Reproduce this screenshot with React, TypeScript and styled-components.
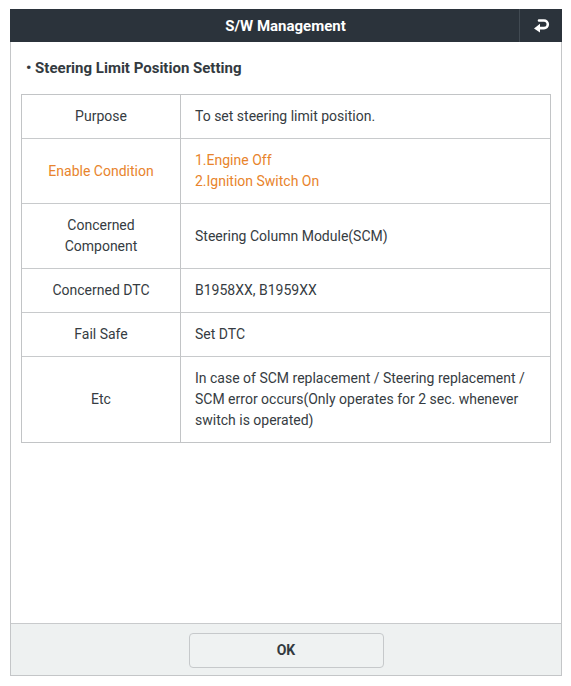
import React from "react";
import styled, { createGlobalStyle } from "styled-components";

const Global = createGlobalStyle`
  html, body { margin: 0; padding: 0; background: #ffffff; }
  body { font-family: Roboto, "Liberation Sans", Arial, sans-serif; }
`;

const Page = styled.div`
  padding: 9px 9px 10px 10px;
`;

const Panel = styled.div`
  width: 552px;
  height: 667px;
  box-sizing: border-box;
  border: 1px solid #c4c6c8;
  border-top: none;
  display: flex;
  flex-direction: column;
  background: #ffffff;
`;

const Header = styled.div`
  height: 33px;
  margin: 0 -1px;
  background: #2b333b;
  display: flex;
  align-items: center;
`;

const Title = styled.div`
  flex: 1;
  text-align: center;
  color: #ffffff;
  font-weight: 700;
  font-size: 15px;
  padding-left: 42px;
`;

const BackButton = styled.div`
  width: 42px;
  height: 33px;
  border-left: 1px solid #414a52;
  display: flex;
  align-items: center;
  justify-content: center;
`;

const Body = styled.div`
  flex: 1;
  padding: 0 10px;
`;

const Subtitle = styled.div`
  padding: 16px 0 15px 5px;
  font-size: 15px;
  line-height: 21px;
  font-weight: 700;
  color: #333a40;
`;

const Table = styled.div`
  border: 1px solid #c2c4c6;
  display: grid;
  grid-template-columns: 159px 1fr;
`;

const Label = styled.div<{ $accent?: boolean; $last?: boolean }>`
  border-right: 1px solid #c2c4c6;
  border-bottom: ${(p) => (p.$last ? "none" : "1px solid #c8cacc")};
  display: flex;
  align-items: center;
  justify-content: center;
  text-align: center;
  padding: 11px 8px;
  font-size: 14px;
  line-height: 21px;
  color: ${(p) => (p.$accent ? "#e8842c" : "#363c42")};
`;

const Value = styled.div<{ $accent?: boolean; $last?: boolean }>`
  border-bottom: ${(p) => (p.$last ? "none" : "1px solid #c8cacc")};
  display: flex;
  align-items: center;
  padding: 11px 14px;
  font-size: 14px;
  line-height: 21px;
  color: ${(p) => (p.$accent ? "#e8842c" : "#363c42")};
`;

const Footer = styled.div`
  height: 52px;
  border-top: 1px solid #c8cacc;
  background: #eef1f1;
  display: flex;
  align-items: center;
  justify-content: center;
  box-sizing: border-box;
`;

const OkButton = styled.button`
  width: 195px;
  height: 35px;
  border: 1px solid #c6c9cb;
  border-radius: 4px;
  background: #eff2f2;
  font-family: Roboto, "Liberation Sans", Arial, sans-serif;
  font-weight: 700;
  font-size: 14px;
  color: #333a40;
  margin-top: 1px;
`;

type Row = { label: React.ReactNode; value: React.ReactNode; accent?: boolean };

const rows: Row[] = [
  { label: "Purpose", value: "To set steering limit position." },
  {
    label: "Enable Condition",
    value: (
      <div>
        1.Engine Off
        <br />
        2.Ignition Switch On
      </div>
    ),
    accent: true,
  },
  {
    label: (
      <div>
        Concerned
        <br />
        Component
      </div>
    ),
    value: "Steering Column Module(SCM)",
  },
  { label: "Concerned DTC", value: "B1958XX, B1959XX" },
  { label: "Fail Safe", value: "Set DTC" },
  {
    label: "Etc",
    value: (
      <div>
        In case of SCM replacement / Steering replacement /
        <br />
        SCM error occurs(Only operates for 2 sec. whenever
        <br />
        switch is operated)
      </div>
    ),
  },
];

const ReturnIcon = () => (
  <svg width="17" height="15" viewBox="0 0 17 15">
    <path
      d="M6 2.5 H11 A3.8 3.8 0 0 1 11 10.1 H5.5"
      fill="none"
      stroke="#ffffff"
      strokeWidth="2.6"
      strokeLinecap="round"
    />
    <path d="M1 10.4 L7 5.8 L7 14.6 Z" fill="#ffffff" />
  </svg>
);

export default function App() {
  return (
    <>
      <Global />
      <Page>
        <Panel>
          <Header>
            <Title>S/W Management</Title>
            <BackButton>
              <ReturnIcon />
            </BackButton>
          </Header>
          <Body>
            <Subtitle>• Steering Limit Position Setting</Subtitle>
            <Table>
              {rows.map((r, i) => (
                <React.Fragment key={i}>
                  <Label $accent={r.accent} $last={i === rows.length - 1}>
                    {r.label}
                  </Label>
                  <Value $accent={r.accent} $last={i === rows.length - 1}>
                    {r.value}
                  </Value>
                </React.Fragment>
              ))}
            </Table>
          </Body>
          <Footer>
            <OkButton>OK</OkButton>
          </Footer>
        </Panel>
      </Page>
    </>
  );
}
